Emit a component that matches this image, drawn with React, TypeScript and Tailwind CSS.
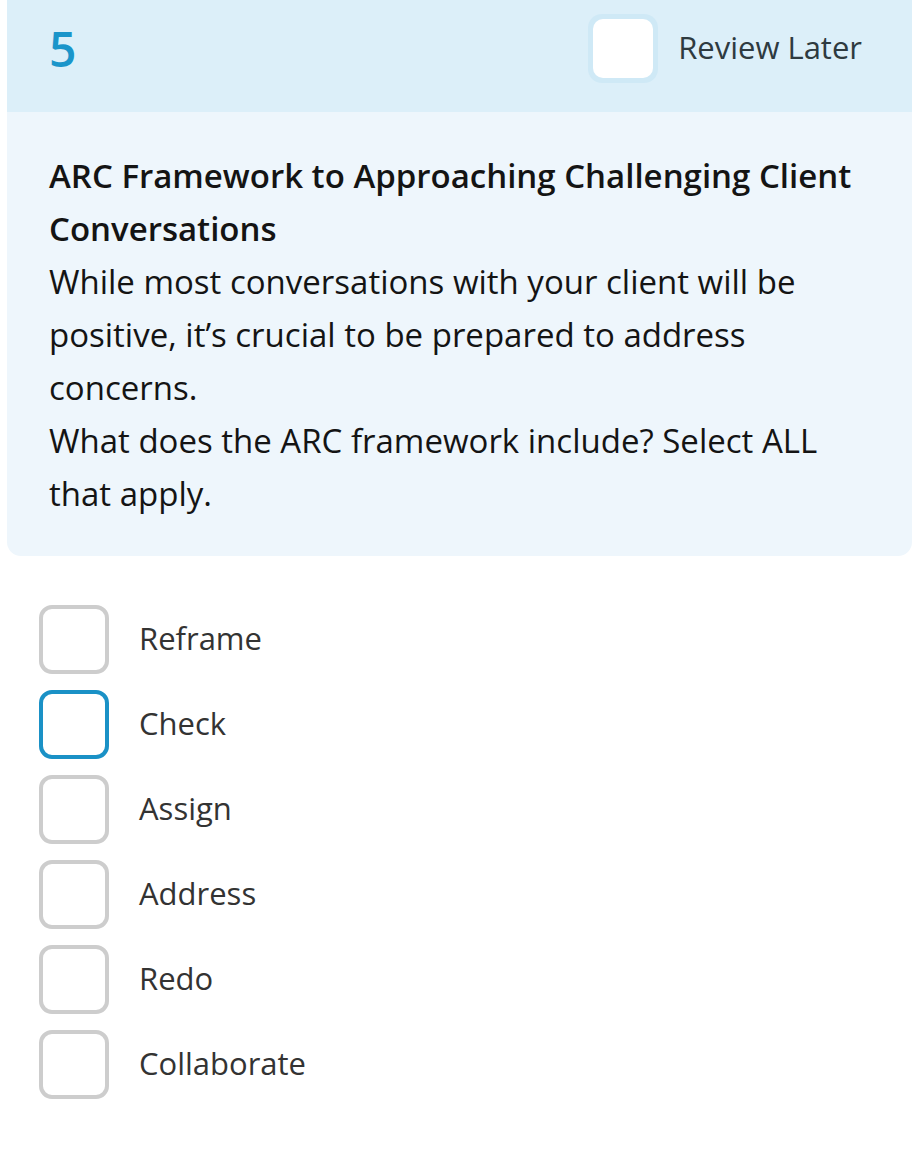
import React from "react";

const options = ["Reframe", "Check", "Assign", "Address", "Redo", "Collaborate"];

export default function App() {
  return (
    <div className="min-h-[1157px] w-[922px] bg-white" style={{ fontFamily: '"Open Sans", "Noto Sans", sans-serif' }}>
      <div className="ml-[7px] w-[905px]">
        <div className="flex h-[112px] items-start justify-between bg-[#dceff9] pl-[42px] pr-[50px] pt-[14px]">
          <div className="mt-[2px] text-[48px] leading-[66px] font-semibold text-[#1a95ca]">5</div>
          <div className="flex items-center gap-[20px]">
            <div className="h-[69px] w-[70px] rounded-[14px] bg-[#cfe9f6] p-[5px]">
              <div className="h-full w-full rounded-[10px] bg-white" />
            </div>
            <span className="mb-[4px] text-[31px] leading-[40px] text-[#2e3a40]">Review Later</span>
          </div>
        </div>
        <div className="rounded-b-[14px] bg-[#eef6fc] pl-[42px] pr-[40px] pt-[37px] pb-[36px] text-[33px] leading-[53px] text-[#141414]">
          <div className="text-[33px] font-semibold">ARC Framework to Approaching Challenging Client Conversations</div>
          <div>While most conversations with your client will be positive, it’s crucial to be prepared to address concerns.</div>
          <div>What does the ARC framework include? Select ALL that apply.</div>
        </div>
      </div>
      <div className="mt-[49px] flex flex-col gap-[16px] pl-[39px]">
        {options.map((o, i) => (
          <div key={o} className="flex items-center gap-[30px]">
            <div
              className={
                i === 1
                  ? "h-[69px] w-[70px] rounded-[13px] border-[4px] border-[#1a91c6] bg-white"
                  : "h-[69px] w-[70px] rounded-[13px] border-[4px] border-[#cdcdcd] bg-white"
              }
            />
            <span className="mb-[4px] text-[31px] leading-[40px] text-[#333333]">{o}</span>
          </div>
        ))}
      </div>
    </div>
  );
}
